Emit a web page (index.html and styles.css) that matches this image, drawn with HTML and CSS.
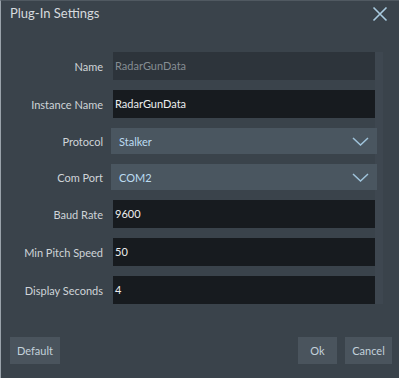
FILE: index.html
```html
<!DOCTYPE html>
<html>
<head>
<meta charset="utf-8">
<link rel="stylesheet" href="styles.css">
</head>
<body>
<div class="dialog">
  <div class="titlebar">
    <span class="title">Plug-In Settings</span>
    <svg class="close" width="16" height="16" viewBox="0 0 16 16"><path d="M1.5 1.5 L14.5 14.5 M14.5 1.5 L1.5 14.5" stroke="#a9cbe0" stroke-width="1.6" fill="none"/></svg>
  </div>
  <div class="form">
    <div class="row"><label class="lbl">Name</label><div class="field disabled">RadarGunData</div></div>
    <div class="row"><label class="lbl">Instance Name</label><div class="field">RadarGunData</div></div>
    <div class="row combo-row"><label class="lbl">Protocol</label><div class="combo"><span>Stalker</span><svg width="17" height="9" viewBox="0 0 17 9"><path d="M1 1 L8.5 8 L16 1" stroke="#9fc3da" stroke-width="1.5" fill="none"/></svg></div></div>
    <div class="row combo-row"><label class="lbl">Com Port</label><div class="combo"><span>COM2</span><svg width="17" height="9" viewBox="0 0 17 9"><path d="M1 1 L8.5 8 L16 1" stroke="#9fc3da" stroke-width="1.5" fill="none"/></svg></div></div>
    <div class="row"><label class="lbl">Baud Rate</label><div class="field">9600</div></div>
    <div class="row"><label class="lbl">Min Pitch Speed</label><div class="field">50</div></div>
    <div class="row"><label class="lbl">Display Seconds</label><div class="field">4</div></div>
  </div>
  <div class="footer">
    <button class="btn btn-default">Default</button>
    <div class="spacer"></div>
    <button class="btn btn-ok">Ok</button>
    <button class="btn btn-cancel">Cancel</button>
  </div>
</div>
</body>
</html>
```
FILE: styles.css
```css
html, body {
  margin: 0;
  padding: 0;
  background: #3a434b;
}
.dialog {
  width: 399px;
  height: 378px;
  box-sizing: border-box;
  background: #3a434b;
  border-left: 1px solid #9aa3ab;
  border-top: 1px solid #505961;
  font-family: Lato, "Open Sans", sans-serif;
  font-size: 11px;
  color: #cdd2d6;
  display: flex;
  flex-direction: column;
}
.titlebar {
  height: 28px;
  display: flex;
  align-items: center;
  justify-content: space-between;
  padding: 0 11px 0 9px;
}
.title {
  color: #d6dade;
  font-size: 13px;
  margin-top: -5px;
}
.close {
  margin-top: -2px;
}
.form {
  margin-top: 23px;
  display: flex;
  flex-direction: column;
  gap: 10px;
  padding-right: 24px;
  background: linear-gradient(to right, transparent 374px, #3e4750 374px, #3e4750 382px, transparent 382px);
}
.row {
  display: grid;
  grid-template-columns: 102px 1fr;
  column-gap: 10px;
  height: 28px;
  align-items: center;
}
.combo-row {
  height: 26px;
  column-gap: 8px;
}
.combo-row .combo {
  margin-right: -2px;
}
.lbl {
  text-align: right;
  color: #cfd4d8;
}
.field {
  height: 28px;
  line-height: 28px;
  background: #171b1f;
  color: #eceeef;
  padding-left: 2px;
}
.field.disabled {
  background: #2d343b;
  color: #868d93;
}
.combo {
  height: 26px;
  background: #4a5660;
  color: #bcdcf2;
  display: flex;
  align-items: center;
  justify-content: space-between;
  padding: 0 8px 0 8px;
}
.footer {
  margin-top: auto;
  margin-bottom: 14px;
  display: flex;
  padding: 0 7px 0 9px;
  gap: 8px;
}
.spacer {
  flex: 1;
}
.btn {
  height: 27px;
  border: none;
  background: #4a545d;
  color: #c3d1db;
  font-family: Lato, "Open Sans", sans-serif;
  font-size: 11px;
  padding: 0;
}
.btn-default { width: 50px; }
.btn-ok { width: 39px; }
.btn-cancel { width: 47px; }
```
